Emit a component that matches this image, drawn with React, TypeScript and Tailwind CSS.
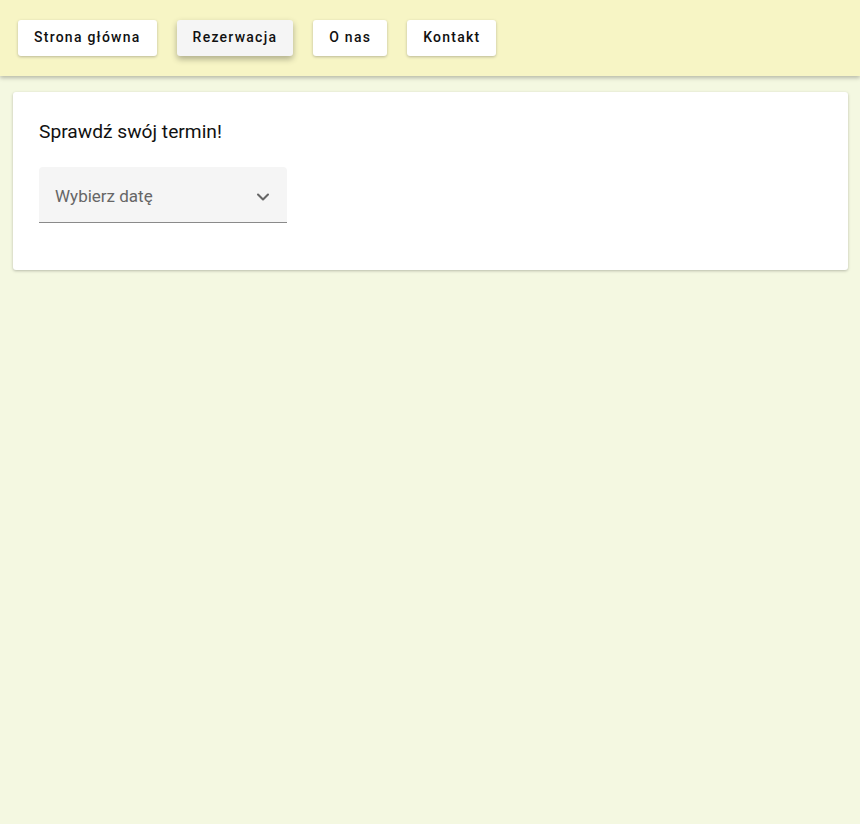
import { ChevronDown } from "lucide-react";

const links = ["Strona główna", "Rezerwacja", "O nas", "Kontakt"];

export default function App() {
  return (
    <div className="min-h-screen bg-[#f4f8e1] font-['Roboto',sans-serif]">
      <header className="flex h-[76px] items-center gap-5 bg-[#f7f5c5] px-[18px] shadow-[0_2px_4px_rgba(0,0,0,0.25)]">
        {links.map((l) => (
          <a
            key={l}
            href="#"
            className={
              "flex h-9 items-center rounded-[3px] px-4 pb-[2px] text-sm font-medium tracking-[1.25px] text-[#111] " +
              (l === "Rezerwacja"
                ? "bg-[#f5f5f5] shadow-[0_3px_6px_rgba(0,0,0,0.3)]"
                : "bg-white shadow-[0_1px_3px_rgba(0,0,0,0.25)]")
            }
          >
            {l}
          </a>
        ))}
      </header>

      <main className="pl-[13px] pr-3 pt-4">
        <div className="rounded-[3px] bg-white px-[26px] pb-[47px] pt-[28px] shadow-[0_1px_3px_rgba(0,0,0,0.25)]">
          <h2 className="text-[19.2px] leading-6 text-[#111]">Sprawdź swój termin!</h2>
          <div className="mt-[23px] flex h-14 w-[248px] items-center justify-between rounded-t-[4px] border-b border-[#8a8a8a] bg-[#f5f5f5] pl-4 pr-[14px] pt-1">
            <span className="text-[17px] text-[#666]">Wybierz datę</span>
            <ChevronDown className="h-5 w-5 text-[#666]" strokeWidth={2.5} />
          </div>
        </div>
      </main>
    </div>
  );
}
